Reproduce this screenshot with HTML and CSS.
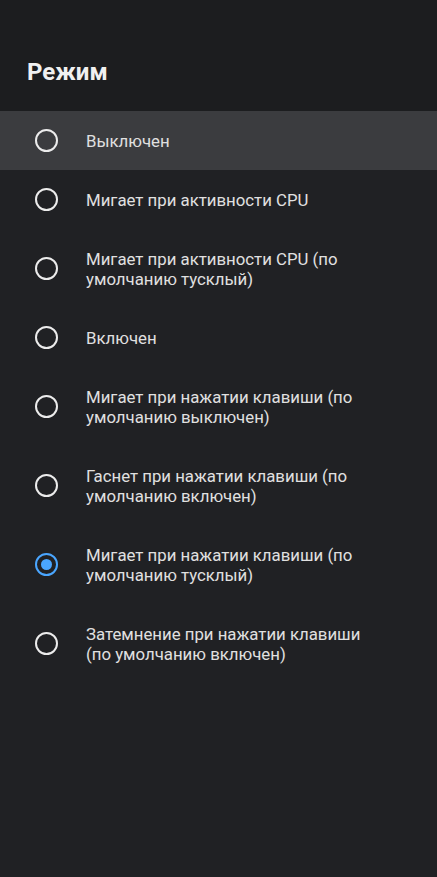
FILE: index.html
```html
<!DOCTYPE html>
<html lang="ru">
<head>
<meta charset="utf-8">
<link rel="stylesheet" href="styles.css">
</head>
<body>
<div class="screen">
  <h1 class="title">Режим</h1>
  <ul class="list">
    <li class="item selected-bg"><span class="radio"></span><span class="label">Выключен</span></li>
    <li class="item"><span class="radio"></span><span class="label">Мигает при активности CPU</span></li>
    <li class="item"><span class="radio"></span><span class="label">Мигает при активности CPU (по умолчанию тусклый)</span></li>
    <li class="item"><span class="radio"></span><span class="label">Включен</span></li>
    <li class="item"><span class="radio"></span><span class="label">Мигает при нажатии клавиши (по умолчанию выключен)</span></li>
    <li class="item"><span class="radio"></span><span class="label">Гаснет при нажатии клавиши (по умолчанию включен)</span></li>
    <li class="item"><span class="radio checked"></span><span class="label">Мигает при нажатии клавиши (по умолчанию тусклый)</span></li>
    <li class="item"><span class="radio"></span><span class="label">Затемнение при нажатии клавиши (по умолчанию включен)</span></li>
  </ul>
</div>
</body>
</html>
```
FILE: styles.css
```css
html, body {
  margin: 0;
  padding: 0;
  background: #202124;
}
.screen {
  width: 437px;
  height: 877px;
  background: #202124;
  font-family: Roboto, "Noto Sans", sans-serif;
  color: #e0e0e0;
  overflow: hidden;
}
.title {
  margin: 0;
  padding: 57px 27px 0;
  height: 54px;
  font-size: 24px;
  font-weight: 700;
  line-height: 30px;
  color: #f0f0f0;
  background: #1c1d1f;
}
.list {
  list-style: none;
  margin: 0;
  padding: 0;
}
.item {
  display: flex;
  align-items: center;
  padding: 19.5px 62px 19.5px 35px;
}
.selected-bg {
  background: #3b3c3f;
}
.radio {
  flex: none;
  box-sizing: border-box;
  width: 23px;
  height: 23px;
  border: 2px solid #ececec;
  border-radius: 50%;
  margin: -1.5px 28px -1.5px 0;
  position: relative;
}
.radio.checked {
  border: 2.5px solid #4aa6ff;
}
.radio.checked::after {
  content: "";
  position: absolute;
  left: 50%;
  top: 50%;
  width: 11px;
  height: 11px;
  margin: -5.5px 0 0 -5.5px;
  border-radius: 50%;
  background: #4aa6ff;
}
.label {
  font-size: 16.8px;
  line-height: 20px;
}
```
